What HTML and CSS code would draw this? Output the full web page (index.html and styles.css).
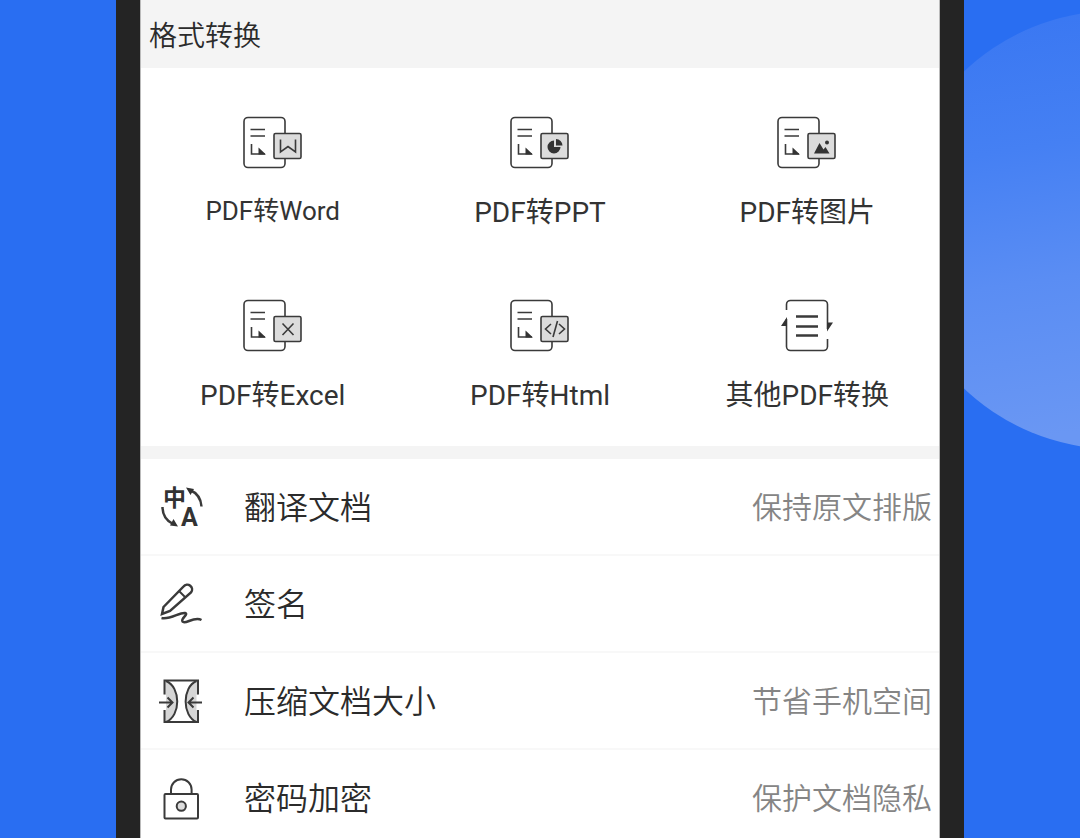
FILE: index.html
```html
<!DOCTYPE html>
<html lang="zh-CN">
<head>
  <meta charset="UTF-8">
  <meta name="viewport" content="width=device-width, initial-scale=1.0">
  <title>格式转换</title>
  <link rel="stylesheet" href="styles.css">
</head>
<body>
  <svg class="bubble" viewBox="0 0 184 438" aria-hidden="true">
    <defs>
      <linearGradient id="shade" x1="0" y1="0" x2="0.15" y2="1">
        <stop offset="0" stop-color="#3876f2"/>
        <stop offset="0.35" stop-color="#4580f3"/>
        <stop offset="0.65" stop-color="#5a8df3"/>
        <stop offset="1" stop-color="#6a97f3"/>
      </linearGradient>
    </defs>
    <circle cx="219" cy="219" r="219"/>
  </svg>

  <!-- shared document outline -->
  <svg class="defs" width="0" height="0" aria-hidden="true">
    <symbol id="doc" viewBox="0 0 62 53">
      <rect x="2" y="1.5" width="41" height="50" rx="4"/>
      <path d="M8.5 13.5H23M8.5 20H23M9.5 28V38H23"/>
      <path class="solid" d="M16.5 31.5L24 38.5H16.5Z"/>
      <rect class="tint" x="32" y="17.5" width="27" height="25" rx="1.5"/>
    </symbol>
  </svg>

  <main class="phone">
    <h1 class="title">格式转换</h1>

    <nav class="formats">
      <a class="format" href="#word">
        <svg class="format-icon" viewBox="0 0 62 53">
          <use href="#doc"/>
          <path d="M38.5 23.5V36L46 30.5L53.5 36V23.5"/>
        </svg>
        <span class="small">PDF转Word</span>
      </a>
      <a class="format" href="#ppt">
        <svg class="format-icon" viewBox="0 0 62 53">
          <use href="#doc"/>
          <path class="fill" d="M45 24.5A6.5 6.5 0 1 0 51.5 31H45Z"/>
          <path class="fill" d="M47 23A6.5 6.5 0 0 1 53.5 29.5H47Z"/>
        </svg>
        <span>PDF转PPT</span>
      </a>
      <a class="format" href="#image">
        <svg class="format-icon" viewBox="0 0 62 53">
          <use href="#doc"/>
          <path class="fill" d="M38 37.5L43.5 27L47.5 33.5L49.5 31L53.5 37.5Z"/>
          <circle class="fill" cx="51" cy="26.5" r="2"/>
        </svg>
        <span>PDF转图片</span>
      </a>
      <a class="format" href="#excel">
        <svg class="format-icon" viewBox="0 0 62 53">
          <use href="#doc"/>
          <path d="M40.5 24.5L51.5 36M51.5 24.5L40.5 36"/>
        </svg>
        <span>PDF转Excel</span>
      </a>
      <a class="format" href="#html">
        <svg class="format-icon" viewBox="0 0 62 53">
          <use href="#doc"/>
          <path d="M42 25L36.5 30L42 35M50 25L55.5 30L50 35M48.5 22L44 38"/>
        </svg>
        <span>PDF转Html</span>
      </a>
      <a class="format" href="#other">
        <svg class="format-icon" viewBox="0 0 62 53">
          <path d="M10.5 11V5.5A4 4 0 0 1 14.5 1.5H47.5A4 4 0 0 1 51.5 5.5V30"/>
          <path d="M51.5 40V47.5A4 4 0 0 1 47.5 51.5H14.5A4 4 0 0 1 10.5 47.5V20"/>
          <path class="fill" d="M11 18V27H5ZM51 23.5H57L51 32.5Z"/>
          <path class="bold" d="M20 17.5H42M20 27.5H42M20 36.5H42"/>
        </svg>
        <span>其他PDF转换</span>
      </a>
    </nav>

    <ul class="tools">
      <li>
        <a class="tool" href="#translate">
          <svg class="tool-icon" viewBox="0 0 44 44">
            <text class="glyph-zh" x="4" y="21">中</text>
            <text class="glyph-en" x="22" y="41">A</text>
            <path class="bold" d="M31 5C38 8 42 14 42.5 21.5M3.5 22C3.5 30 8 36 14 39"/>
            <path class="fill" d="M27 2.5L35 4L31.5 10ZM19 41.5L11 40.5L14.5 34Z"/>
          </svg>
          <span class="tool-name">翻译文档</span>
          <span class="tool-note">保持原文排版</span>
        </a>
      </li>
      <li>
        <a class="tool" href="#sign">
          <svg class="tool-icon" viewBox="0 0 44 44">
            <path class="bold" d="M3 32L4.5 25L24.5 4.5A4.5 4.5 0 0 1 32 10.5L11 29Z"/>
            <path d="M20 9L26.5 15.5"/>
            <path class="bold" d="M2.5 36C11 38 21 30 26 31C30 32.5 21.5 36 23.5 39.5C26 43 35 34 42.5 38"/>
          </svg>
          <span class="tool-name">签名</span>
        </a>
      </li>
      <li>
        <a class="tool" href="#compress">
          <svg class="tool-icon" viewBox="0 0 44 44">
            <path class="tint-fill" d="M5.5 2C23 8 23 37 5.5 43ZM39 2C22 8 22 37 39 43Z"/>
            <path class="gap" d="M5.5 15.5V31M39 15.5V31"/>
            <path d="M5.5 15.5V1.5H39V15.5M5.5 31V43H39V31"/>
            <path d="M7 2C22 8 22 37 7 43M37.5 2C23 8 23 37 37.5 43"/>
            <path d="M0 23.5H13M8.5 18.5L13.5 23.5L8.5 28.5M43 23.5H30M34.5 18.5L29.5 23.5L34.5 28.5"/>
          </svg>
          <span class="tool-name">压缩文档大小</span>
          <span class="tool-note">节省手机空间</span>
        </a>
      </li>
      <li>
        <a class="tool" href="#encrypt">
          <svg class="tool-icon" viewBox="0 0 44 44">
            <path d="M12 18V13.5A10.3 10.3 0 0 1 32.6 13.5V18"/>
            <rect x="5.5" y="18" width="33.5" height="24.5" rx="1"/>
            <circle class="tint" cx="22.3" cy="30.2" r="4.6"/>
          </svg>
          <span class="tool-name">密码加密</span>
          <span class="tool-note">保护文档隐私</span>
        </a>
      </li>
    </ul>
  </main>
</body>
</html>
```
FILE: styles.css
```css
* {
  box-sizing: border-box;
}

body {
  margin: 0;
  height: 100vh;
  overflow: hidden;
  background: #296ef2;
  color: #2b2b2b;
  font-family: Roboto, "Noto Sans CJK SC", sans-serif;
  font-size: 28px;
  font-weight: 350;
}

a {
  color: inherit;
  text-decoration: none;
}

svg {
  fill: none;
  stroke: #3a3a3a;
  stroke-width: 1.6;
}

.defs {
  position: absolute;
}

/* big translucent circle behind the phone */
.bubble {
  position: absolute;
  top: 11px;
  right: 0;
  width: 184px;
  height: 438px;
  fill: url(#shade);
  stroke: none;
}

.phone {
  position: relative;
  height: 100vh;
  margin: 0 116px;
  overflow: hidden;
  border: solid #242424;
  border-width: 0 24px;
  background: #fff;
  box-shadow: inset 1px 0 #bbb, inset -1px 0 #bbb;
}

.title {
  margin: 0 1px;
  padding: 17px 8px 11px;
  background: #f4f4f4;
  font-size: 28px;
  font-weight: 350;
  line-height: 40px;
}

.formats {
  display: grid;
  grid-template-columns: repeat(3, 1fr);
  column-gap: 4px;
  row-gap: 68px;
  margin: 0 1px;
  padding: 48px 0 32px;
  border-bottom: 13px solid #f4f4f4;
}

.format {
  display: flex;
  flex-direction: column;
  align-items: center;
  gap: 26px;
  color: #333;
  font-weight: 400;
  line-height: 36px;
}

.small {
  font-size: 26px;
  line-height: 32px;
}

.format-icon {
  width: 62px;
  height: 53px;
}

.solid,
.fill {
  fill: #333;
  stroke: none;
}

.bold {
  stroke-width: 2.5;
}

.tint {
  fill: #dcdcdc;
}

.tint-fill {
  fill: #d6d6d6;
  stroke: none;
}

.gap {
  stroke: #fff;
  stroke-width: 3;
}

.tools {
  margin: 0 1px;
  padding: 0;
  list-style: none;
}

.tool {
  display: flex;
  align-items: center;
  padding: 23px 7px 22px 18px;
  border-bottom: 2px solid #f8f8f8;
  line-height: 48px;
}

.tool-icon {
  flex: none;
  width: 44px;
  height: 44px;
  margin-right: 41px;
  overflow: visible;
  stroke-width: 2;
}

.tool-name,
.tool-note {
  padding-top: 2px;
}

.tool-name {
  flex: 1;
  font-size: 32px;
}

.tool-note {
  color: #858585;
  font-size: 30px;
}

.glyph-zh,
.glyph-en {
  fill: #333;
  stroke: none;
  font-weight: 700;
}

.glyph-zh {
  font-size: 23px;
}

.glyph-en {
  font-size: 25px;
}
```
